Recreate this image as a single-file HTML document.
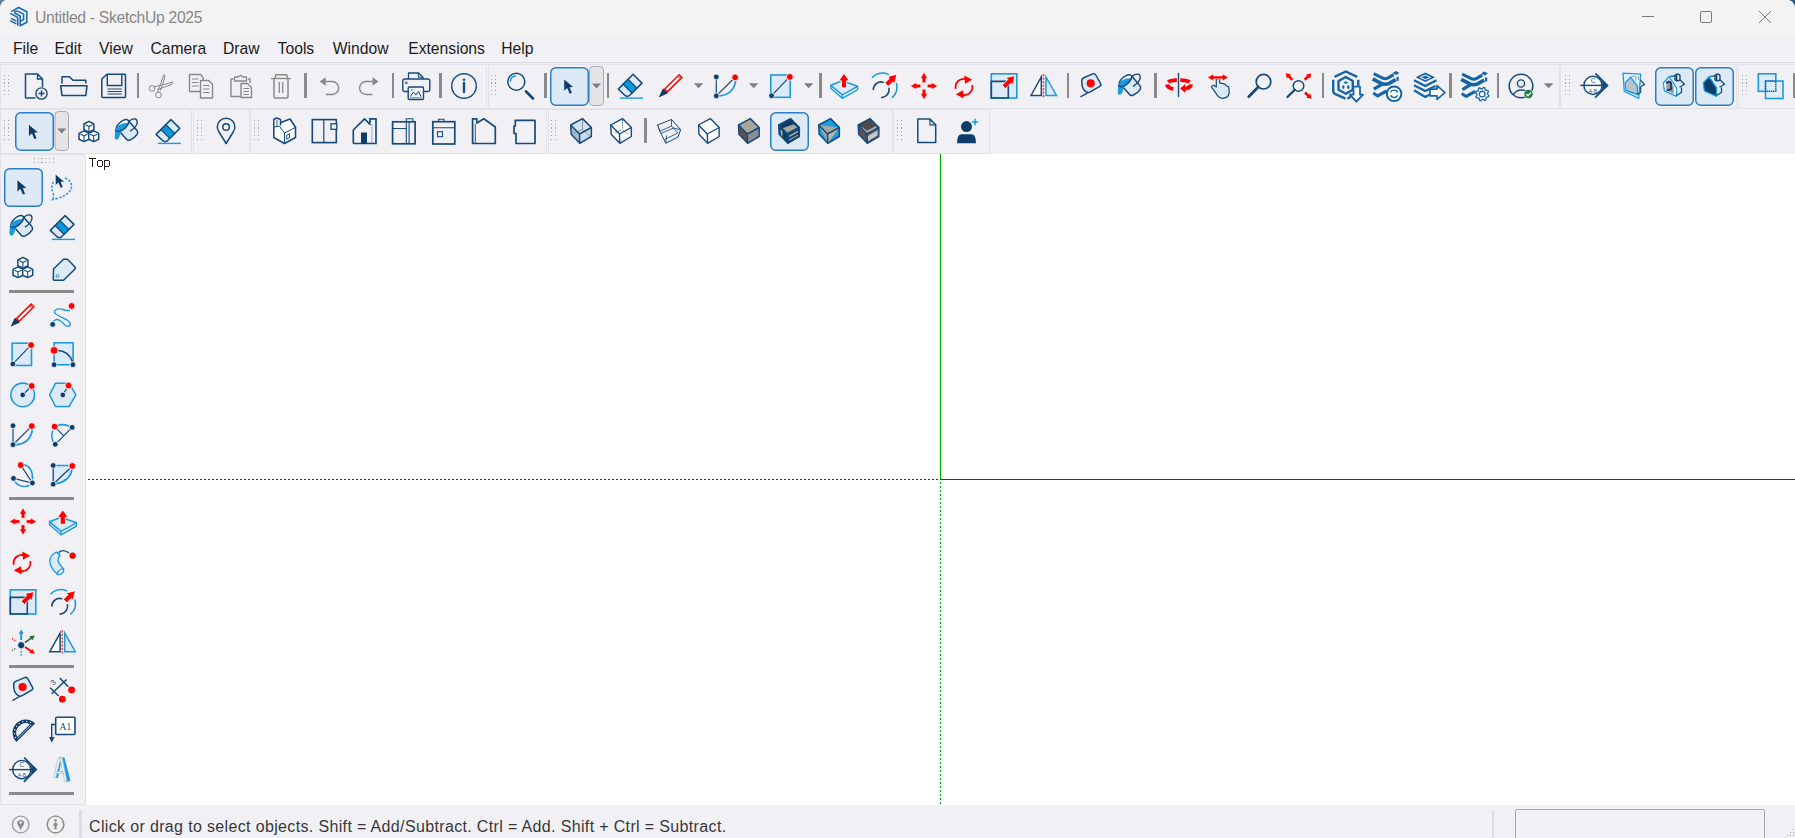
<!DOCTYPE html>
<html><head><meta charset="utf-8"><style>
html,body{margin:0;padding:0;width:1795px;height:838px;overflow:hidden;background:#f1f1f5;}
body{position:relative;font-family:"Liberation Sans",sans-serif;}
.t{position:absolute;white-space:nowrap;}
.m{position:absolute;top:39px;font-size:15.7px;line-height:20px;color:#1b1b1b;white-space:nowrap;}
</style></head><body>
<svg width="1795" height="838" viewBox="0 0 1795 838" style="position:absolute;left:0;top:0"><rect x="0" y="0" width="1795" height="36" fill="#f3f3f3"/><rect x="0" y="36" width="1795" height="802" fill="#f1f1f5"/><rect x="0" y="62" width="1795" height="1" fill="#d9dadf"/><rect x="0.5" y="64.5" width="486" height="44" fill="none" stroke="#e1e2ea" stroke-width="1" shape-rendering="crispEdges"/><rect x="488.5" y="64.5" width="1071" height="44" fill="none" stroke="#e1e2ea" stroke-width="1" shape-rendering="crispEdges"/><rect x="1560.5" y="64.5" width="176" height="44" fill="none" stroke="#e1e2ea" stroke-width="1" shape-rendering="crispEdges"/><rect x="1738.5" y="64.5" width="62" height="44" fill="none" stroke="#e1e2ea" stroke-width="1" shape-rendering="crispEdges"/><rect x="0.5" y="109.5" width="191" height="44" fill="none" stroke="#e1e2ea" stroke-width="1" shape-rendering="crispEdges"/><rect x="193.5" y="109.5" width="56" height="44" fill="none" stroke="#e1e2ea" stroke-width="1" shape-rendering="crispEdges"/><rect x="250.5" y="109.5" width="296" height="44" fill="none" stroke="#e1e2ea" stroke-width="1" shape-rendering="crispEdges"/><rect x="548.5" y="109.5" width="344" height="44" fill="none" stroke="#e1e2ea" stroke-width="1" shape-rendering="crispEdges"/><rect x="893.5" y="109.5" width="96" height="44" fill="none" stroke="#e1e2ea" stroke-width="1" shape-rendering="crispEdges"/><rect x="0.5" y="154.5" width="85" height="650" fill="none" stroke="#e1e2ea" stroke-width="1" shape-rendering="crispEdges"/><rect x="86" y="154" width="1709" height="651" fill="#ffffff"/><rect x="4" y="75" width="1" height="1" fill="#a3a3a8"/><rect x="8" y="75" width="1" height="1" fill="#a3a3a8"/><rect x="4" y="79" width="1" height="1" fill="#a3a3a8"/><rect x="8" y="79" width="1" height="1" fill="#a3a3a8"/><rect x="4" y="82" width="1" height="2" fill="#a3a3a8"/><rect x="8" y="82" width="1" height="2" fill="#a3a3a8"/><rect x="4" y="86" width="1" height="1" fill="#a3a3a8"/><rect x="8" y="86" width="1" height="1" fill="#a3a3a8"/><rect x="4" y="90" width="1" height="1" fill="#a3a3a8"/><rect x="8" y="90" width="1" height="1" fill="#a3a3a8"/><rect x="4" y="94" width="1" height="1" fill="#a3a3a8"/><rect x="8" y="94" width="1" height="1" fill="#a3a3a8"/><rect x="491" y="75" width="1" height="1" fill="#a3a3a8"/><rect x="495" y="75" width="1" height="1" fill="#a3a3a8"/><rect x="491" y="79" width="1" height="1" fill="#a3a3a8"/><rect x="495" y="79" width="1" height="1" fill="#a3a3a8"/><rect x="491" y="82" width="1" height="2" fill="#a3a3a8"/><rect x="495" y="82" width="1" height="2" fill="#a3a3a8"/><rect x="491" y="86" width="1" height="1" fill="#a3a3a8"/><rect x="495" y="86" width="1" height="1" fill="#a3a3a8"/><rect x="491" y="90" width="1" height="1" fill="#a3a3a8"/><rect x="495" y="90" width="1" height="1" fill="#a3a3a8"/><rect x="491" y="94" width="1" height="1" fill="#a3a3a8"/><rect x="495" y="94" width="1" height="1" fill="#a3a3a8"/><rect x="1565" y="75" width="1" height="1" fill="#a3a3a8"/><rect x="1569" y="75" width="1" height="1" fill="#a3a3a8"/><rect x="1565" y="79" width="1" height="1" fill="#a3a3a8"/><rect x="1569" y="79" width="1" height="1" fill="#a3a3a8"/><rect x="1565" y="82" width="1" height="2" fill="#a3a3a8"/><rect x="1569" y="82" width="1" height="2" fill="#a3a3a8"/><rect x="1565" y="86" width="1" height="1" fill="#a3a3a8"/><rect x="1569" y="86" width="1" height="1" fill="#a3a3a8"/><rect x="1565" y="90" width="1" height="1" fill="#a3a3a8"/><rect x="1569" y="90" width="1" height="1" fill="#a3a3a8"/><rect x="1565" y="94" width="1" height="1" fill="#a3a3a8"/><rect x="1569" y="94" width="1" height="1" fill="#a3a3a8"/><rect x="1742" y="75" width="1" height="1" fill="#a3a3a8"/><rect x="1746" y="75" width="1" height="1" fill="#a3a3a8"/><rect x="1742" y="79" width="1" height="1" fill="#a3a3a8"/><rect x="1746" y="79" width="1" height="1" fill="#a3a3a8"/><rect x="1742" y="82" width="1" height="2" fill="#a3a3a8"/><rect x="1746" y="82" width="1" height="2" fill="#a3a3a8"/><rect x="1742" y="86" width="1" height="1" fill="#a3a3a8"/><rect x="1746" y="86" width="1" height="1" fill="#a3a3a8"/><rect x="1742" y="90" width="1" height="1" fill="#a3a3a8"/><rect x="1746" y="90" width="1" height="1" fill="#a3a3a8"/><rect x="1742" y="94" width="1" height="1" fill="#a3a3a8"/><rect x="1746" y="94" width="1" height="1" fill="#a3a3a8"/><rect x="4" y="120" width="1" height="1" fill="#a3a3a8"/><rect x="8" y="120" width="1" height="1" fill="#a3a3a8"/><rect x="4" y="124" width="1" height="1" fill="#a3a3a8"/><rect x="8" y="124" width="1" height="1" fill="#a3a3a8"/><rect x="4" y="127" width="1" height="2" fill="#a3a3a8"/><rect x="8" y="127" width="1" height="2" fill="#a3a3a8"/><rect x="4" y="131" width="1" height="1" fill="#a3a3a8"/><rect x="8" y="131" width="1" height="1" fill="#a3a3a8"/><rect x="4" y="135" width="1" height="1" fill="#a3a3a8"/><rect x="8" y="135" width="1" height="1" fill="#a3a3a8"/><rect x="4" y="139" width="1" height="1" fill="#a3a3a8"/><rect x="8" y="139" width="1" height="1" fill="#a3a3a8"/><rect x="197" y="120" width="1" height="1" fill="#a3a3a8"/><rect x="201" y="120" width="1" height="1" fill="#a3a3a8"/><rect x="197" y="124" width="1" height="1" fill="#a3a3a8"/><rect x="201" y="124" width="1" height="1" fill="#a3a3a8"/><rect x="197" y="127" width="1" height="2" fill="#a3a3a8"/><rect x="201" y="127" width="1" height="2" fill="#a3a3a8"/><rect x="197" y="131" width="1" height="1" fill="#a3a3a8"/><rect x="201" y="131" width="1" height="1" fill="#a3a3a8"/><rect x="197" y="135" width="1" height="1" fill="#a3a3a8"/><rect x="201" y="135" width="1" height="1" fill="#a3a3a8"/><rect x="197" y="139" width="1" height="1" fill="#a3a3a8"/><rect x="201" y="139" width="1" height="1" fill="#a3a3a8"/><rect x="254" y="120" width="1" height="1" fill="#a3a3a8"/><rect x="258" y="120" width="1" height="1" fill="#a3a3a8"/><rect x="254" y="124" width="1" height="1" fill="#a3a3a8"/><rect x="258" y="124" width="1" height="1" fill="#a3a3a8"/><rect x="254" y="127" width="1" height="2" fill="#a3a3a8"/><rect x="258" y="127" width="1" height="2" fill="#a3a3a8"/><rect x="254" y="131" width="1" height="1" fill="#a3a3a8"/><rect x="258" y="131" width="1" height="1" fill="#a3a3a8"/><rect x="254" y="135" width="1" height="1" fill="#a3a3a8"/><rect x="258" y="135" width="1" height="1" fill="#a3a3a8"/><rect x="254" y="139" width="1" height="1" fill="#a3a3a8"/><rect x="258" y="139" width="1" height="1" fill="#a3a3a8"/><rect x="551" y="120" width="1" height="1" fill="#a3a3a8"/><rect x="555" y="120" width="1" height="1" fill="#a3a3a8"/><rect x="551" y="124" width="1" height="1" fill="#a3a3a8"/><rect x="555" y="124" width="1" height="1" fill="#a3a3a8"/><rect x="551" y="127" width="1" height="2" fill="#a3a3a8"/><rect x="555" y="127" width="1" height="2" fill="#a3a3a8"/><rect x="551" y="131" width="1" height="1" fill="#a3a3a8"/><rect x="555" y="131" width="1" height="1" fill="#a3a3a8"/><rect x="551" y="135" width="1" height="1" fill="#a3a3a8"/><rect x="555" y="135" width="1" height="1" fill="#a3a3a8"/><rect x="551" y="139" width="1" height="1" fill="#a3a3a8"/><rect x="555" y="139" width="1" height="1" fill="#a3a3a8"/><rect x="897" y="120" width="1" height="1" fill="#a3a3a8"/><rect x="901" y="120" width="1" height="1" fill="#a3a3a8"/><rect x="897" y="124" width="1" height="1" fill="#a3a3a8"/><rect x="901" y="124" width="1" height="1" fill="#a3a3a8"/><rect x="897" y="127" width="1" height="2" fill="#a3a3a8"/><rect x="901" y="127" width="1" height="2" fill="#a3a3a8"/><rect x="897" y="131" width="1" height="1" fill="#a3a3a8"/><rect x="901" y="131" width="1" height="1" fill="#a3a3a8"/><rect x="897" y="135" width="1" height="1" fill="#a3a3a8"/><rect x="901" y="135" width="1" height="1" fill="#a3a3a8"/><rect x="897" y="139" width="1" height="1" fill="#a3a3a8"/><rect x="901" y="139" width="1" height="1" fill="#a3a3a8"/><rect x="34" y="158" width="1" height="1" fill="#a3a3a8"/><rect x="34" y="162" width="1" height="1" fill="#a3a3a8"/><rect x="38" y="158" width="1" height="1" fill="#a3a3a8"/><rect x="38" y="162" width="1" height="1" fill="#a3a3a8"/><rect x="41" y="158" width="2" height="1" fill="#a3a3a8"/><rect x="41" y="162" width="2" height="1" fill="#a3a3a8"/><rect x="45" y="158" width="1" height="1" fill="#a3a3a8"/><rect x="45" y="162" width="1" height="1" fill="#a3a3a8"/><rect x="49" y="158" width="1" height="1" fill="#a3a3a8"/><rect x="49" y="162" width="1" height="1" fill="#a3a3a8"/><rect x="53" y="158" width="1" height="1" fill="#a3a3a8"/><rect x="53" y="162" width="1" height="1" fill="#a3a3a8"/><g transform="translate(24.5,73)"><path d="M1 25 V1 H13 L18 6 V14" fill="none" stroke="#164a7b" stroke-width="1.5"/><path d="M13 1 V6 H18" fill="none" stroke="#164a7b" stroke-width="1.3"/><path d="M1 25 H11" fill="none" stroke="#164a7b" stroke-width="1.5"/><circle cx="17" cy="20.5" r="5.6" fill="#f1f1f5" stroke="#164a7b" stroke-width="1.4"/><path d="M17 17.5 V23.5 M14 20.5 H20" stroke="#164a7b" stroke-width="1.5"/></g><g transform="translate(60,76)"><path d="M2 7 V0.8 H9.5 L13 4.3 H25.8 V7" fill="none" stroke="#164a7b" stroke-width="1.5" stroke-linejoin="round" stroke-linecap="round"/><path d="M0.7 9.7 H27 L25.8 19.5 H2 Z" fill="none" stroke="#164a7b" stroke-width="1.6" stroke-linejoin="round" stroke-linecap="round"/></g><g transform="translate(101,73.5)"><path d="M0.8 5.5 L6 0.8 H23.5 Q24.5 0.8 24.5 2 V23 Q24.5 24 23.5 24 H1.8 Q0.8 24 0.8 23 Z" fill="none" stroke="#164a7b" stroke-width="1.5"/><path d="M6.3 0.8 V12 H20.8 V0.8" fill="none" stroke="#164a7b" stroke-width="1.4"/><path d="M6.5 15.5 H20.8 M6.5 18 H20.8 M6.5 20.5 H20.8" stroke="#164a7b" stroke-width="1.1"/></g><rect x="137" y="73" width="2" height="25" fill="#8a8a8a"/><g transform="translate(148.5,73.5)"><circle cx="3.5" cy="15" r="2.8" fill="none" stroke="#888888" stroke-width="1"/><circle cx="10" cy="21.5" r="2.8" fill="none" stroke="#888888" stroke-width="1"/><path d="M5.5 13.5 L24.5 8.5 L23 11 L9 16 M9 19 L15.5 1 L16.5 3.5 L12 17" fill="none" stroke="#888888" stroke-width="1" stroke-linejoin="round" stroke-linecap="round"/></g><g transform="translate(188.5,73.5)"><path d="M1 1 H12 L14.5 3.8 V18 H1 Z" fill="#f1f1f5" stroke="#888888" stroke-width="1.4" stroke-linejoin="round" stroke-linecap="round"/><path d="M3.5 5.5 H10 M3.5 9 H10 M3.5 12.5 H10" stroke="#888888" stroke-width="1"/><path d="M12 7 H20.2 L24 10.8 V24.5 H12 Z" fill="#f1f1f5" stroke="#888888" stroke-width="1.4" stroke-linejoin="round" stroke-linecap="round"/><path d="M14.5 12 H21 M14.5 15.5 H21 M14.5 19 H21" stroke="#888888" stroke-width="1"/></g><g transform="translate(230,73.5)"><path d="M3 5.5 H1 V23 H12 M18.5 5.5 H20 V9" fill="none" stroke="#888888" stroke-width="1.4" stroke-linejoin="round" stroke-linecap="round"/><path d="M4.5 3.5 H8.5 Q10.5 0.5 12.5 3.5 H16.5 V7.5 H4.5 Z" fill="#f1f1f5" stroke="#888888" stroke-width="1.3" stroke-linejoin="round" stroke-linecap="round"/><path d="M11 10 H17.5 L21.5 14 V24 H11 Z" fill="#f1f1f5" stroke="#888888" stroke-width="1.4" stroke-linejoin="round" stroke-linecap="round"/><path d="M13.5 15 H19 M13.5 18 H19 M13.5 21 H19" stroke="#888888" stroke-width="1"/></g><g transform="translate(271,74)"><path d="M0 4.5 H20" stroke="#888888" stroke-width="1.3"/><path d="M4.5 4.5 V1.5 Q4.5 0.8 5.5 0.8 H15 Q16 0.8 16 1.5 V4.5" fill="none" stroke="#888888" stroke-width="1.4"/><path d="M3 4.5 V22.5 Q3 24 4.5 24 H15.5 Q17 24 17 22.5 V4.5" fill="none" stroke="#888888" stroke-width="1.5"/><path d="M8.3 8 V19 M11.7 8 V19" stroke="#888888" stroke-width="1.3"/></g><rect x="304" y="73" width="3" height="25" fill="#8a8a8a"/><g transform="translate(319.7,77.3)"><path d="M0 4.2 L6 0 V8.4 Z" fill="#888888"/><path d="M5.5 4.2 H12.5 A6.5 6.5 0 0 1 12.5 17.2 H6" fill="none" stroke="#888888" stroke-width="1.4"/></g><g transform="translate(358.5,77.3)"><path d="M20 4.2 L14 0 V8.4 Z" fill="#888888"/><path d="M14.5 4.2 H7.5 A6.5 6.5 0 0 0 7.5 17.2 H14" fill="none" stroke="#888888" stroke-width="1.4"/></g><rect x="392" y="73" width="2" height="25" fill="#8a8a8a"/><g transform="translate(402,72)"><path d="M6.5 7 V1 H16.5 L21 5.2 V7" fill="none" stroke="#164a7b" stroke-width="1.3" stroke-linejoin="round" stroke-linecap="round"/><path d="M16.3 1 V5.2 H21" fill="none" stroke="#164a7b" stroke-width="1"/><rect x="0.8" y="7" width="27" height="12.5" rx="2" fill="#f1f1f5" stroke="#164a7b" stroke-width="1.4"/><circle cx="4.3" cy="10.8" r="1" fill="none" stroke="#164a7b" stroke-width="0.9"/><rect x="6.2" y="15" width="15.3" height="12.5" rx="1" fill="#f1f1f5" stroke="#164a7b" stroke-width="1.4"/><path d="M8.5 24.5 L11.5 20 L14 23 L16.5 19.5 L19 24.5" fill="none" stroke="#164a7b" stroke-width="1"/><path d="M8 25.8 H20" stroke="#164a7b" stroke-width="1" opacity=".6"/><circle cx="9.8" cy="18" r="0.7" fill="#164a7b"/></g><rect x="439" y="73" width="3" height="25" fill="#8a8a8a"/><g transform="translate(451,73)"><circle cx="13" cy="13" r="12.3" fill="none" stroke="#164a7b" stroke-width="1.4"/><circle cx="13" cy="6.8" r="1.3" fill="#164a7b"/><path d="M13 10 V19" stroke="#164a7b" stroke-width="2.4" stroke-linecap="round"/></g><g transform="translate(507,72.5)"><circle cx="9.3" cy="9.3" r="8.5" fill="none" stroke="#164a7b" stroke-width="1.5"/><path d="M3.5 8.5 A5.5 5.5 0 0 1 8.5 3.5" fill="none" stroke="#1b9ae0" stroke-width="1.5" stroke-linecap="round"/><path d="M19 19 L26 26" stroke="#164a7b" stroke-width="2.6" stroke-linecap="round"/></g><rect x="544" y="73" width="3" height="25" fill="#8a8a8a"/><rect x="550.75" y="67.75" width="37.5" height="37.5" rx="5" fill="#ddeaf6" stroke="#2b7ec9" stroke-width="1.5"/><rect x="589.5" y="66.5" width="14" height="39" rx="3.5" fill="#e4e4e7" stroke="#acacb0" stroke-width="1"/><path d="M592.0 83.5 L601.0 83.5 L596.5 88.5 Z" fill="#7f7f82"/><g transform="translate(563.8,78.7)"><path d="M0 0 L0 12.8 L3.3 9.9 L5.6 15.6 L8.6 14.4 L6.3 8.9 L10.4 8.8 Z" fill="#0f3d6b" stroke="#ffffff" stroke-width="0.7" stroke-linejoin="round"/></g><rect x="607" y="73" width="2" height="25" fill="#8a8a8a"/><g transform="translate(617.5,73.5)"><path d="M15.6 0.8 L24.5 9.6 L12 22 Q9.5 24 7 21.5 L0.8 15.6 Z" fill="#dce9f6" stroke="#164a7b" stroke-width="1.5" stroke-linejoin="round"/><path d="M10.6 5.8 L19.5 14.6 L14.5 19.6 L5.6 10.8 Z" fill="#0a96dc" stroke="#164a7b" stroke-width="1.3" stroke-linejoin="round"/><path d="M2.5 24.6 H25.5" stroke="#1b9ae0" stroke-width="1.4"/></g><g transform="translate(658.6,73.8)"><path d="M0 23.6 L4.4 14.4 L9.4 19.4 Z" fill="#0f3d6b"/><path d="M6 15.4 L20.6 0.9 L23.3 3.6 L8.7 18.1 Z" fill="#ffffff" stroke="#ff0000" stroke-width="1.5" stroke-linejoin="miter"/><circle cx="20.5" cy="3.6" r="0.7" fill="none" stroke="#ff0000" stroke-width="0.6"/></g><path d="M693.8 83.3 L703.3 83.3 L698.55 88.3 Z" fill="#7f7f82"/><g transform="translate(713.8,74)"><path d="M2.5 2.9 V21.9 L21.3 3.3" fill="none" stroke="#164a7b" stroke-width="1.2"/><path d="M4.5 22.2 Q20 20.5 21.8 7" fill="none" stroke="#1b9ae0" stroke-width="1.8"/><circle cx="2.5" cy="2.9" r="2.9" fill="#0f3d6b" stroke="#fff" stroke-width=".8"/><circle cx="2.5" cy="21.9" r="2.9" fill="#0f3d6b" stroke="#fff" stroke-width=".8"/><circle cx="21.3" cy="3.3" r="3.4" fill="#ff0000" stroke="#fff" stroke-width=".8"/></g><path d="M748.9 83.3 L758.4 83.3 L753.65 88.3 Z" fill="#7f7f82"/><g transform="translate(769,73.8)"><rect x="1.8" y="1.2" width="19.4" height="22.3" fill="#dce9f6" stroke="#1b9ae0" stroke-width="1.6"/><path d="M2.6 21.9 L20.8 2.9" stroke="#164a7b" stroke-width="1.2"/><circle cx="2.6" cy="21.9" r="2.9" fill="#0f3d6b" stroke="#fff" stroke-width=".8"/><circle cx="20.8" cy="3.1" r="3.4" fill="#ff0000" stroke="#fff" stroke-width=".8"/></g><path d="M803.9 83.3 L813.4 83.3 L808.65 88.3 Z" fill="#7f7f82"/><rect x="819" y="73" width="3" height="25" fill="#8a8a8a"/><g transform="translate(830,73)"><path d="M0.8 12.3 L12 7.8 L27.6 13.3 L12.3 21.8 Z" fill="#dce9f6" stroke="#1b9ae0" stroke-width="1.5" stroke-linejoin="round"/><path d="M0.8 12.3 V15.3 L12.3 25.3 L27.6 16.6 V13.3 M12.3 21.8 V25.3" fill="none" stroke="#1b9ae0" stroke-width="1.4" stroke-linejoin="round"/><path d="M14 0.3 L19.3 7.8 H16.6 V14.8 H11.4 V7.8 H8.7 Z" fill="#ff0000" stroke="#fff" stroke-width=".9" stroke-linejoin="round"/></g><g transform="translate(871,72.5)"><path d="M1.4 4.7 A14 14 0 0 1 17.3 1.9" fill="none" stroke="#1b9ae0" stroke-width="1.6" stroke-linecap="round"/><path d="M25.5 11 A14 14 0 0 1 21.4 24.9" fill="none" stroke="#1b9ae0" stroke-width="1.6" stroke-linecap="round"/><path d="M2.3 17 A7.9 7.9 0 0 1 12.2 9.7" fill="none" stroke="#164a7b" stroke-width="1.6" stroke-linecap="round"/><path d="M18 15.7 A7.9 7.9 0 0 1 10.7 25.1" fill="none" stroke="#164a7b" stroke-width="1.6" stroke-linecap="round"/><path d="M17.38 13.86 L21.91 9.29 L23.68 11.04 L25.90 1.70 L16.58 4.01 L18.35 5.77 L13.82 10.34 Z" fill="#ff0000" stroke="#fff" stroke-width="0.9" stroke-linejoin="round"/></g><g transform="translate(910.5,72.5)"><path d="M13.5 -0.2 L17 6 H15.3 V10.2 H11.7 V6 H10 Z" fill="#ff0000" stroke="#fff" stroke-width=".5" stroke-linejoin="round" transform="rotate(0 13.5 13.5)"/><path d="M13.5 -0.2 L17 6 H15.3 V10.2 H11.7 V6 H10 Z" fill="#ff0000" stroke="#fff" stroke-width=".5" stroke-linejoin="round" transform="rotate(90 13.5 13.5)"/><path d="M13.5 -0.2 L17 6 H15.3 V10.2 H11.7 V6 H10 Z" fill="#ff0000" stroke="#fff" stroke-width=".5" stroke-linejoin="round" transform="rotate(180 13.5 13.5)"/><path d="M13.5 -0.2 L17 6 H15.3 V10.2 H11.7 V6 H10 Z" fill="#ff0000" stroke="#fff" stroke-width=".5" stroke-linejoin="round" transform="rotate(270 13.5 13.5)"/></g><g transform="translate(954,75.5)"><path d="M1.8 13.3 A8.2 8.2 0 0 1 11.5 3.5" fill="none" stroke="#ff0000" stroke-width="1.8"/><path d="M10.3 0 L18.2 4.3 L11 8.3 Z" fill="#ff0000"/><path d="M18.2 9.5 A8.2 8.2 0 0 1 8.5 19.5" fill="none" stroke="#ff0000" stroke-width="1.8"/><path d="M9.7 23 L1.8 18.7 L9 14.7 Z" fill="#ff0000"/></g><g transform="translate(990.5,73)"><rect x="0.8" y="0.8" width="25.5" height="24.2" fill="#dce9f6" stroke="#1b9ae0" stroke-width="1.6"/><path d="M0.8 8.4 H17.8 V25 H0.8 Z" fill="none" stroke="#164a7b" stroke-width="1.6"/><path d="M14.94 15.51 L20.69 9.66 L22.61 11.55 L24.30 2.70 L15.48 4.55 L17.40 6.44 L11.66 12.29 Z" fill="#ff0000" stroke="#fff" stroke-width="0.8" stroke-linejoin="round"/></g><g transform="translate(1030,73.5)"><path d="M1 22 L11.3 3.5 V22 Z" fill="#fff" stroke="#164a7b" stroke-width="1.5" stroke-linejoin="miter"/><path d="M16 3.5 L26.5 22 H16 Z" fill="#dce9f6" stroke="#1b9ae0" stroke-width="1.5" stroke-linejoin="miter"/><path d="M13.5 0.5 V24" stroke="#f04848" stroke-width="1.6" stroke-dasharray="2.2 1.3"/></g><rect x="1067" y="73" width="2" height="25" fill="#8a8a8a"/><g transform="translate(1080,70.1)"><g transform="translate(-1 0)"><path d="M9.5 22.2 L1.5 26.8" stroke="#164a7b" stroke-width="1.4"/><path d="M2.8 11 Q2.5 8.6 4.8 7.6 L13.6 3.8 Q15.8 3 16.8 4.9 L21.6 13.5 Q22.5 15.3 20.8 16.3 L10.8 22 Q9 22.8 7.3 21.8 Q3.5 19.5 3 14.5 Z" fill="#dce9f6" stroke="#164a7b" stroke-width="1.5" stroke-linejoin="round"/><circle cx="11.7" cy="13.2" r="4.1" fill="#ff0000"/></g></g><g transform="translate(1118,73.5)"><g transform="translate(-4.2 -3.7)"><path d="M9.3 17.5 L15.8 24.8 Q17.3 26.3 19.5 25.2 Q24.5 22.8 26.5 19.5 Q27.6 17.3 26 15.6 L17.5 5.8" fill="#dce9f6" stroke="#164a7b" stroke-width="1.5" stroke-linejoin="round"/><ellipse cx="11.5" cy="10.8" rx="7.8" ry="3.7" transform="rotate(-42 11.5 10.8)" fill="#fff" stroke="#164a7b" stroke-width="1.4"/><path d="M16.3 8.5 Q9.5 8.3 5.8 13 Q3.6 17 3.9 23 Q4.2 25.6 6.5 24.9 Q8.8 23.6 9.4 20 Q9.9 17.5 11.7 15.7 L16.5 10.8 Z" fill="#1b9ae0"/><path d="M4.6 15.2 A7.8 3.7 -42 0 0 18 6" fill="none" stroke="#164a7b" stroke-width="1.4"/><path d="M19.3 16.5 Q24.8 13.2 26.2 9 Q27 5.3 24.5 4.4 Q21.5 3.8 18.3 6.6" fill="none" stroke="#164a7b" stroke-width="1.4"/></g></g><rect x="1154" y="73" width="3" height="25" fill="#8a8a8a"/><g transform="translate(1166,73)"><g transform="translate(-4 -3)"><path d="M14.9 10.2 Q8 10.3 6.3 12.2" fill="none" stroke="#ff0000" stroke-width="3.8"/><path d="M18.3 10.2 Q25.5 10.3 27.6 12.2" fill="none" stroke="#ff0000" stroke-width="3.8"/><path d="M5 14.5 Q5.5 17.5 11.2 19.2" fill="none" stroke="#ff0000" stroke-width="4"/><path d="M28.8 14.3 Q29 17.6 22.5 18.8" fill="none" stroke="#ff0000" stroke-width="4"/><path d="M18.2 18.6 L23.2 14 V23 Z" fill="#ff0000"/><path d="M16.5 3.5 V26.5" stroke="#164a7b" stroke-width="1.4" stroke-linecap="round"/></g></g><g transform="translate(1207.5,73.5)"><path d="M8.8 13.5 V6 Q10.5 4.3 12.2 6 V9.6 L15.1 9.9 L17.6 10.9 L18.9 12.4 L21.2 13.3 Q21.9 17 21.6 19.6 Q20.8 24.6 15.1 24.8 Q12.3 24.6 10.4 22.6 L4 13.3 Q4.9 11.5 6.3 11.8 Z" fill="#dce9f6" stroke="#164a7b" stroke-width="1.2" stroke-linejoin="round"/><path d="M-0.2 3.9 L6 0.2 V2.4 H15 V0.2 L20.9 3.9 L15 7.5 V5.4 H6 V7.5 Z" fill="#ff0000" stroke="#fff" stroke-width=".6" stroke-linejoin="round"/></g><g transform="translate(1247,73.5)"><circle cx="16.5" cy="8.2" r="7.3" fill="none" stroke="#164a7b" stroke-width="1.7"/><path d="M11.2 13.5 L1.7 23.2" stroke="#164a7b" stroke-width="2.7" stroke-linecap="round"/></g><g transform="translate(1285.5,73)"><circle cx="13" cy="13" r="5.3" fill="none" stroke="#164a7b" stroke-width="1.5"/><path d="M9.3 16.8 L2 24" stroke="#164a7b" stroke-width="2.3" stroke-linecap="round"/><path d="M7.72 5.88 L4.30 2.46 L5.43 1.33 L0.20 0.20 L1.33 5.43 L2.46 4.30 L5.88 7.72 Z" fill="#ff0000"/><path d="M20.10 7.73 L23.47 4.47 L24.59 5.61 L25.80 0.40 L20.55 1.45 L21.66 2.60 L18.30 5.87 Z" fill="#ff0000"/><path d="M18.60 20.43 L21.86 23.60 L20.75 24.75 L26.00 25.80 L24.79 20.59 L23.67 21.73 L20.40 18.57 Z" fill="#ff0000"/></g><rect x="1322" y="73" width="2" height="25" fill="#8a8a8a"/><g transform="translate(1332,70.5)"><g transform="translate(-2 -2.3)"><path d="M4.5 8.7 L15.8 3.3 L27.2 8.7" fill="none" stroke="#1464a8" stroke-width="2.4"/><path d="M3.2 11.5 V23 Q3.5 25 5.5 26 L15.5 30.5" fill="none" stroke="#1464a8" stroke-width="2.4"/><path d="M28.3 11.5 V18.5 M17.5 30.5 L20.5 28.5" fill="none" stroke="#1464a8" stroke-width="2.4"/><path d="M15.8 8.8 L22.8 12.8 V21.5 L15.8 25.5 L8.5 21.5 V12.8 Z" fill="none" stroke="#1464a8" stroke-width="2.4" stroke-linejoin="round"/><path d="M15.8 13 L18.2 14.4 L15.8 15.8 L13.4 14.4 Z" fill="#1464a8"/><ellipse cx="13.3" cy="18.9" rx="1.2" ry="1.9" fill="#1464a8"/><ellipse cx="18.3" cy="18.9" rx="1.2" ry="1.9" fill="#1464a8"/><path d="M23.5 18.5 H30 V26.5 H33 L26.3 33.5 L19.8 26.5 H23.5 Z" fill="#fff" stroke="#1464a8" stroke-width="1.8" stroke-linejoin="round"/></g></g><g transform="translate(1372,72)"><g transform="translate(-2.3 -4.4)"><path d="M4 6 L12.5 10.3 Q15.5 11.8 18.5 10.3 L24 7" fill="none" stroke="#1464a8" stroke-width="3"/><path d="M24.3 5.3 L26.3 4.2 L28.5 5.4 L26.5 6.6 Z" fill="#1464a8" stroke="#1464a8" stroke-width="1.2"/><path d="M27.9 9.3 V13.3" stroke="#1464a8" stroke-width="2.2"/><path d="M3 11.2 L11.5 15.7 Q15.5 17.6 19.5 15.7 L26 12" fill="none" stroke="#1464a8" stroke-width="3.6"/><path d="M12.5 16.5 L4.2 21.6" fill="none" stroke="#1464a8" stroke-width="3.3"/><path d="M3.5 25.5 L8 28.3 L17 23.3" fill="none" stroke="#1464a8" stroke-width="3" stroke-linejoin="round"/><circle cx="24.4" cy="26.2" r="7.3" fill="#fff" stroke="#1464a8" stroke-width="2"/><path d="M21 24.8 A3.6 3.2 0 0 1 27.5 24 M27.8 27.6 A3.6 3.2 0 0 1 21.3 28.4" fill="none" stroke="#1464a8" stroke-width="1.4"/><path d="M26.5 22.5 L28.8 24.3 L26.3 25 Z M22.3 29.9 L20 28.1 L22.5 27.4 Z" fill="#1464a8"/></g></g><g transform="translate(1413.5,72)"><g transform="translate(-4 -4.4)"><path d="M15.8 5 L25.5 9.7 L15.8 14.3 L6.2 9.7 Z" fill="#1464a8"/><path d="M15.8 7.5 L21 9.8 L15.8 12 L10.6 9.8 Z" fill="none" stroke="#fff" stroke-width="1"/><path d="M4.5 12.7 L15.8 18.5 L27 12.7 M4.5 17.7 L15.8 23.5 L26 18.3 M4.5 22.7 L15.8 29.3 L20 27" fill="none" stroke="#1464a8" stroke-width="2.3" stroke-linejoin="round"/><path d="M20.5 21.5 H27.5 V18 L35.5 25 L27.5 31.7 V28.2 H20.5 Z" fill="#fff" stroke="#1464a8" stroke-width="1.7" stroke-linejoin="round"/></g></g><rect x="1449" y="73" width="3" height="25" fill="#8a8a8a"/><g transform="translate(1460.5,72.5)"><g transform="translate(-2.3 -4.4)"><path d="M4 6 L12.5 10.3 Q15.5 11.8 18.5 10.3 L24 7" fill="none" stroke="#1464a8" stroke-width="3"/><path d="M24.3 5.3 L26.3 4.2 L28.5 5.4 L26.5 6.6 Z" fill="#1464a8" stroke="#1464a8" stroke-width="1.2"/><path d="M27.9 9.3 V13.3" stroke="#1464a8" stroke-width="2.2"/><path d="M3 11.2 L11.5 15.7 Q15.5 17.6 19.5 15.7 L26 12" fill="none" stroke="#1464a8" stroke-width="3.6"/><path d="M12.5 16.5 L4.2 21.6" fill="none" stroke="#1464a8" stroke-width="3.3"/><path d="M3.5 25.5 L8 28.3 L17 23.3" fill="none" stroke="#1464a8" stroke-width="3" stroke-linejoin="round"/></g><path d="M28.36 22.95 L27.97 24.23 L26.10 24.56 L25.44 25.36 L25.46 27.27 L24.28 27.89 L22.72 26.81 L21.68 26.90 L20.35 28.26 L19.07 27.87 L18.74 26.00 L17.94 25.34 L16.03 25.36 L15.41 24.18 L16.49 22.62 L16.40 21.58 L15.04 20.25 L15.43 18.97 L17.30 18.64 L17.96 17.84 L17.94 15.93 L19.12 15.31 L20.68 16.39 L21.72 16.30 L23.05 14.94 L24.33 15.33 L24.66 17.20 L25.46 17.86 L27.37 17.84 L27.99 19.02 L26.91 20.58 L27.00 21.62 Z" fill="#fff" stroke="#1464a8" stroke-width="1.3" stroke-linejoin="round"/><circle cx="21.7" cy="21.6" r="2.856" fill="none" stroke="#1464a8" stroke-width="1.3"/></g><rect x="1497" y="73" width="2" height="25" fill="#8a8a8a"/><g transform="translate(1508.5,73.5)"><circle cx="12.5" cy="12.5" r="11.8" fill="none" stroke="#164a7b" stroke-width="1.5"/><circle cx="12.5" cy="10" r="3.6" fill="none" stroke="#164a7b" stroke-width="1.4"/><path d="M5 21 Q8 16.5 12.5 16.5 Q17 16.5 19.5 19" fill="none" stroke="#164a7b" stroke-width="1.4"/><circle cx="20" cy="20.5" r="4.6" fill="#1a7a3a" stroke="#f1f1f5" stroke-width="0.8"/><path d="M17.8 20.5 L19.5 22.3 L22.5 18.8" fill="none" stroke="#fff" stroke-width="1.3"/></g><path d="M1543.9 83.3 L1553.4 83.3 L1548.65 88.3 Z" fill="#7f7f82"/><g transform="translate(1580,73)"><circle cx="13" cy="12.4" r="9.1" fill="#fff" stroke="#164a7b" stroke-width="1.5"/><path d="M0.3 12.4 H24" stroke="#164a7b" stroke-width="1.5"/><path d="M15.4 0.4 L27.4 12.4 L15.1 24.7" fill="none" stroke="#164a7b" stroke-width="1.7"/><path d="M22.3 7.3 L27.6 12.4 L22.3 17.5 Z" fill="#164a7b"/><text x="13" y="9.8" font-family="Liberation Sans" font-size="6.5" fill="#164a7b" text-anchor="middle">C</text><text x="13" y="19.5" font-family="Liberation Sans" font-size="5" fill="#164a7b" text-anchor="middle">A-B</text></g><g transform="translate(1623,72.5)"><g transform="translate(-5 -4.5)"><path d="M5 5.2 L22.7 6.2 L20.8 30.3 L6.3 23.5 Z" fill="#e3effa" stroke="#1b9ae0" stroke-width="1.3" stroke-linejoin="round"/><path d="M8.5 15.5 L12.7 10.5 L19 18.8 V26.5 L9 22.5 Z" fill="#b9c2cc"/><path d="M7.3 15 L12.7 9.3 L19.5 18.5 V26.5 L8 22.5 Z" fill="none" stroke="#1b9ae0" stroke-width="1.4" stroke-linejoin="round"/><path d="M22.5 12 L26.5 16.5 L22.5 18.8 M22.7 19 V24.5 L19 26.5" fill="none" stroke="#164a7b" stroke-width="1.2"/><path d="M13 9 L17 8 M17.8 8 V12.5 M20.5 8 V12" fill="none" stroke="#a0aab5" stroke-width="1.1"/></g></g><rect x="1655.75" y="67.75" width="37.5" height="37.5" rx="5" fill="#ddeaf6" stroke="#2b7ec9" stroke-width="1.5"/><rect x="1695.75" y="67.75" width="37.5" height="37.5" rx="5" fill="#ddeaf6" stroke="#2b7ec9" stroke-width="1.5"/><g transform="translate(1663,74)"><g transform="translate(-7 -6)"><path d="M7.3 15 L13 8.7 L20.5 19.8 V28.3 L8.5 23 Z" fill="#fff" stroke="#1b9ae0" stroke-width="1.3" stroke-linejoin="round"/><path d="M10 14.5 L13 11.3 L17.8 18.5 V26 L10.5 22.5 Z" fill="#9c9a98"/><path d="M10 14.5 L15 13.8 M15 14 V21.2 L10.5 22.5" fill="none" stroke="#0f3d6b" stroke-width="1.8"/><path d="M14.5 8.3 L19 7.8 M23.5 11.5 L28.5 16.3 L23.5 19.3 M25.5 19.5 V24.5 L20.5 27.5" fill="none" stroke="#164a7b" stroke-width="1.3" stroke-linejoin="round"/><path d="M13 8.7 L15 8" stroke="#1b9ae0" stroke-width="1.2"/><rect x="19" y="6.3" width="5" height="6.5" rx="2" fill="none" stroke="#164a7b" stroke-width="1.4"/><path d="M20.5 6.5 V12" stroke="#164a7b" stroke-width="1.6"/></g></g><g transform="translate(1703,74)"><g transform="translate(-7 -6)"><path d="M7.3 15 L13 8.7 L20.5 19.8 V28.3 L8.5 23 Z" fill="#0f3d6b" stroke="#1b9ae0" stroke-width="1.3" stroke-linejoin="round"/><path d="M14.5 8.3 L19 7.8 M23.5 11.5 L28.5 16.3 L23.5 19.3 M25.5 19.5 V24.5 L20.5 27.5" fill="none" stroke="#164a7b" stroke-width="1.3" stroke-linejoin="round"/><path d="M13 8.7 L15 8" stroke="#1b9ae0" stroke-width="1.2"/><rect x="19" y="6.3" width="5" height="6.5" rx="2" fill="none" stroke="#164a7b" stroke-width="1.4"/><path d="M20.5 6.5 V12" stroke="#164a7b" stroke-width="1.6"/></g></g><g transform="translate(1757.5,73)"><rect x="0.8" y="0.8" width="17.5" height="17.5" fill="#dce9f6" stroke="#1b9ae0" stroke-width="1.6"/><rect x="8" y="8" width="17.5" height="17.5" fill="#dce9f6" fill-opacity=".6" stroke="#1b9ae0" stroke-width="1.6"/><rect x="8" y="8" width="10.3" height="10.3" fill="none" stroke="#164a7b" stroke-width="1.2" stroke-dasharray="1.2 1"/></g><rect x="1793" y="73" width="2" height="25" fill="#8a8a8a"/><rect x="15.75" y="112.75" width="37.5" height="37.5" rx="5" fill="#ddeaf6" stroke="#2b7ec9" stroke-width="1.5"/><rect x="55.0" y="111.5" width="13.5" height="39" rx="3.5" fill="#e4e4e7" stroke="#acacb0" stroke-width="1"/><path d="M57.25 128.5 L66.25 128.5 L61.75 133.5 Z" fill="#7f7f82"/><g transform="translate(28.5,124)"><path d="M0 0 L0 12.8 L3.3 9.9 L5.6 15.6 L8.6 14.4 L6.3 8.9 L10.4 8.8 Z" fill="#0f3d6b" stroke="#ffffff" stroke-width="0.7" stroke-linejoin="round"/></g><g transform="translate(78.5,121)"><g transform="translate(-4.6 -7)"><path d="M15 7.3999999999999995 L20 10.0 V15.8 L15 18.2 L10 15.8 V10.0 Z" fill="#fff" stroke="#164a7b" stroke-width="1.5" stroke-linejoin="round"/><path d="M11.5 10.799999999999999 L15 12.6 L18.5 10.799999999999999 M15 12.6 V17.6" fill="none" stroke="#164a7b" stroke-width="1.1"/><path d="M10.1 16.8 L15.1 19.4 V25.2 L10.1 27.6 L5.1 25.2 V19.4 Z" fill="#fff" stroke="#164a7b" stroke-width="1.5" stroke-linejoin="round"/><path d="M6.6 20.2 L10.1 22 L13.6 20.2 M10.1 22 V27" fill="none" stroke="#164a7b" stroke-width="1.1"/><path d="M19.8 16.8 L24.8 19.4 V25.2 L19.8 27.6 L14.8 25.2 V19.4 Z" fill="#fff" stroke="#164a7b" stroke-width="1.5" stroke-linejoin="round"/><path d="M16.3 20.2 L19.8 22 L23.3 20.2 M19.8 22 V27" fill="none" stroke="#164a7b" stroke-width="1.1"/></g></g><g transform="translate(115,118.3)"><g transform="translate(-4.2 -3.7)"><path d="M9.3 17.5 L15.8 24.8 Q17.3 26.3 19.5 25.2 Q24.5 22.8 26.5 19.5 Q27.6 17.3 26 15.6 L17.5 5.8" fill="#dce9f6" stroke="#164a7b" stroke-width="1.5" stroke-linejoin="round"/><ellipse cx="11.5" cy="10.8" rx="7.8" ry="3.7" transform="rotate(-42 11.5 10.8)" fill="#fff" stroke="#164a7b" stroke-width="1.4"/><path d="M16.3 8.5 Q9.5 8.3 5.8 13 Q3.6 17 3.9 23 Q4.2 25.6 6.5 24.9 Q8.8 23.6 9.4 20 Q9.9 17.5 11.7 15.7 L16.5 10.8 Z" fill="#1b9ae0"/><path d="M4.6 15.2 A7.8 3.7 -42 0 0 18 6" fill="none" stroke="#164a7b" stroke-width="1.4"/><path d="M19.3 16.5 Q24.8 13.2 26.2 9 Q27 5.3 24.5 4.4 Q21.5 3.8 18.3 6.6" fill="none" stroke="#164a7b" stroke-width="1.4"/></g></g><g transform="translate(155.3,118.8)"><path d="M15.6 0.8 L24.5 9.6 L12 22 Q9.5 24 7 21.5 L0.8 15.6 Z" fill="#dce9f6" stroke="#164a7b" stroke-width="1.5" stroke-linejoin="round"/><path d="M10.6 5.8 L19.5 14.6 L14.5 19.6 L5.6 10.8 Z" fill="#0a96dc" stroke="#164a7b" stroke-width="1.3" stroke-linejoin="round"/><path d="M2.5 24.6 H25.5" stroke="#1b9ae0" stroke-width="1.4"/></g><g transform="translate(216.5,118)"><path d="M9.6 25.5 L2.2 13.5 Q0.8 11 0.8 9 A8.8 8.8 0 0 1 18.4 9 Q18.4 11 17 13.5 Z" fill="none" stroke="#164a7b" stroke-width="1.5" stroke-linejoin="round"/><circle cx="9.6" cy="9" r="3.3" fill="none" stroke="#164a7b" stroke-width="1.5"/></g><g transform="translate(273.5,117.5)"><g transform="translate(-5.5 -4.5)"><path d="M5.8 14 V24.5 L16.5 30.5 L27.5 24.5 V14.2 L22 6 L12.5 9.8" fill="#fff" stroke="#164a7b" stroke-width="1.6" stroke-linejoin="round"/><path d="M5.8 14 V6.5 L8.7 5 L12.5 6.5 V12.5" fill="#fff" stroke="#164a7b" stroke-width="1.5" stroke-linejoin="round"/><path d="M9 7 V13" stroke="#164a7b" stroke-width="0.9"/><path d="M11.5 13.3 L16.5 20 L27 14.6 M16.5 20 V30 M5.8 14 L11.5 13.2" fill="none" stroke="#164a7b" stroke-width="1"/><path d="M18.7 22.3 L21.5 20.8 V24.8 L18.7 26.2 Z" fill="none" stroke="#164a7b" stroke-width="1"/></g></g><g transform="translate(311.5,118.8)"><rect x="0.8" y="0.8" width="24" height="23" fill="none" stroke="#164a7b" stroke-width="1.6"/><path d="M12.3 0.8 V23.8" stroke="#164a7b" stroke-width="1.2"/><rect x="19.5" y="5" width="5.8" height="5.5" fill="#f1f1f5" stroke="#164a7b" stroke-width="1.3"/></g><g transform="translate(352.5,118)"><path d="M0.8 25.5 V12 L12 0.8 L18 6.8" fill="none" stroke="#164a7b" stroke-width="1.7" stroke-linejoin="round"/><path d="M17.5 5 V0.8 H23.5 V25.5 H0.8" fill="none" stroke="#164a7b" stroke-width="1.7"/><rect x="8.5" y="14.5" width="6" height="11" fill="#0f3d6b"/><path d="M19.5 6 V25" stroke="#164a7b" stroke-width="0.8" opacity=".5"/></g><g transform="translate(391.8,118)"><rect x="0.8" y="3.8" width="22.5" height="22" fill="none" stroke="#164a7b" stroke-width="1.7"/><path d="M14.5 3.8 V0.8 H21 V3.8 M14.5 3.8 V25.8 M17.3 3.8 V25.8 M0.8 10.5 H14.5" fill="none" stroke="#164a7b" stroke-width="1.1"/></g><g transform="translate(432,118.2)"><rect x="0.8" y="3.5" width="22" height="22.3" fill="none" stroke="#164a7b" stroke-width="1.7"/><path d="M6.5 3.5 V1 H12 V3.5 M0.8 9.5 H22.8" fill="none" stroke="#164a7b" stroke-width="1.1"/><rect x="5.5" y="13.5" width="5" height="5" fill="none" stroke="#164a7b" stroke-width="1.1"/></g><g transform="translate(471.8,118)"><path d="M0.8 25.5 V0.8 H5 V5 L12 0.8 L23.5 9 V25.5 Z" fill="none" stroke="#164a7b" stroke-width="1.7" stroke-linejoin="round"/><path d="M3.5 6 V25" stroke="#164a7b" stroke-width="0.9"/></g><g transform="translate(512.5,119.5)"><path d="M2.8 0.8 H22.5 V24 H3.5 V14 H1.5 V6.5 H2.8 Z" fill="none" stroke="#164a7b" stroke-width="1.7" stroke-linejoin="round"/></g><g transform="translate(570,118)"><path d="M12.5 0.6 L21.4 9.5 L9.5 16 L0.7 7 Z" fill="#cfe3f4"/><path d="M0.7 7 L9.5 16 L9.8 25.3 L1.2 16.3 Z" fill="#a8bdd2"/><path d="M9.5 16 L21.4 9.5 L21.3 18.5 L9.8 25.3 Z" fill="#cadcee"/><path d="M12.5 0.6 V11.5 L2.5 15.5 M12.5 11.5 L20.3 18" fill="none" stroke="#8a8478" stroke-width="0.8"/><path d="M12.5 0.6 L21.4 9.5 L21.3 18.5 L9.8 25.3 L1.2 16.3 L0.7 7 Z" fill="none" stroke="#164a7b" stroke-width="1.5" stroke-linejoin="round"/><path d="M0.7 7 L9.5 16 L21.4 9.5 M9.5 16 L9.8 25.3" fill="none" stroke="#164a7b" stroke-width="1.5" stroke-linejoin="round"/></g><g transform="translate(610,118)"><path d="M12.5 0.6 L21.4 9.5 L9.5 16 L0.7 7 Z" fill="#fff"/><path d="M0.7 7 L9.5 16 L9.8 25.3 L1.2 16.3 Z" fill="#fff"/><path d="M9.5 16 L21.4 9.5 L21.3 18.5 L9.8 25.3 Z" fill="#fff"/><path d="M12.5 2 V11.5 M11 12 L5.5 14.5 M13.5 12.5 L19 17" fill="none" stroke="#164a7b" stroke-width="1" stroke-dasharray="1.2 1.2"/><path d="M12.5 0.6 L21.4 9.5 L21.3 18.5 L9.8 25.3 L1.2 16.3 L0.7 7 Z" fill="none" stroke="#164a7b" stroke-width="1.4" stroke-linejoin="round"/><path d="M0.7 7 L9.5 16 L21.4 9.5 M9.5 16 L9.8 25.3" fill="none" stroke="#164a7b" stroke-width="1.4" stroke-linejoin="round"/></g><rect x="644" y="118" width="3" height="25" fill="#8a8a8a"/><g transform="translate(656.5,118.5)"><g fill="none" stroke="#164a7b" stroke-width="1" stroke-linejoin="round"><path d="M1 6.5 L15 1 L24.2 11.2 L21.3 18.7 L9.3 24.7 L3.9 13.8 Z"/><path d="M1 6.5 L3.9 13.8 M15 1 L15 7.5 L4 12.5 M15 7.5 L21.5 14.5 M4.5 15 L17 9.5 L24.2 11.2 M8 21 L21.3 14.5 M10 17 L9.3 24.7" stroke-width=".85"/></g></g><g transform="translate(697.8,118)"><path d="M12.5 0.6 L21.4 9.5 L9.5 16 L0.7 7 Z" fill="#fff"/><path d="M0.7 7 L9.5 16 L9.8 25.3 L1.2 16.3 Z" fill="#fff"/><path d="M9.5 16 L21.4 9.5 L21.3 18.5 L9.8 25.3 Z" fill="#fff"/><path d="M12.5 0.6 L21.4 9.5 L21.3 18.5 L9.8 25.3 L1.2 16.3 L0.7 7 Z" fill="none" stroke="#164a7b" stroke-width="1.4" stroke-linejoin="round"/><path d="M0.7 7 L9.5 16 L21.4 9.5 M9.5 16 L9.8 25.3" fill="none" stroke="#164a7b" stroke-width="1.4" stroke-linejoin="round"/></g><g transform="translate(737.8,118)"><path d="M12.5 0.6 L21.4 9.5 L9.5 16 L0.7 7 Z" fill="#a9a69b"/><path d="M0.7 7 L9.5 16 L9.8 25.3 L1.2 16.3 Z" fill="#5f5352"/><path d="M9.5 16 L21.4 9.5 L21.3 18.5 L9.8 25.3 Z" fill="#8d8e90"/><path d="M12.5 0.6 L21.4 9.5 L21.3 18.5 L9.8 25.3 L1.2 16.3 L0.7 7 Z" fill="none" stroke="#164a7b" stroke-width="1.5" stroke-linejoin="round"/><path d="M0.7 7 L9.5 16 L21.4 9.5 M9.5 16 L9.8 25.3" fill="none" stroke="#164a7b" stroke-width="1.5" stroke-linejoin="round"/></g><rect x="770.75" y="112.75" width="37.5" height="37.5" rx="5" fill="#ddeaf6" stroke="#2b7ec9" stroke-width="1.5"/><g transform="translate(778,118)"><path d="M12.5 0.6 L21.4 9.5 L9.5 16 L0.7 7 Z" fill="#0f3d6b"/><path d="M0.7 7 L9.5 16 L9.8 25.3 L1.2 16.3 Z" fill="#0f3d6b"/><path d="M9.5 16 L21.4 9.5 L21.3 18.5 L9.8 25.3 Z" fill="#0f3d6b"/><path d="M4 10.5 L9.3 14.8 L19.5 9.6 L15.5 6.2 Z" fill="#a9a69b"/><path d="M2.5 11.5 L4.5 13 V19 L2.8 17.5 Z" fill="#a9a69b"/><path d="M11 17.5 L20 12.5 V14.5 L11 19.3 Z" fill="#a9a69b"/><path d="M11 21.5 L20 16.5 V17.8 L11 22.8 Z" fill="#a9a69b"/><path d="M12.5 0.6 L21.4 9.5 L21.3 18.5 L9.8 25.3 L1.2 16.3 L0.7 7 Z" fill="none" stroke="#164a7b" stroke-width="1.5" stroke-linejoin="round"/><path d="M0.7 7 L9.5 16 L21.4 9.5 M9.5 16 L9.8 25.3" fill="none" stroke="#164a7b" stroke-width="1.5" stroke-linejoin="round"/></g><g transform="translate(818,118)"><path d="M12.5 0.6 L21.4 9.5 L9.5 16 L0.7 7 Z" fill="#1b9ae0"/><path d="M0.7 7 L9.5 16 L9.8 25.3 L1.2 16.3 Z" fill="#1b9ae0"/><path d="M9.5 16 L21.4 9.5 L21.3 18.5 L9.8 25.3 Z" fill="#1b9ae0"/><path d="M0.7 7 L21.4 9.5 L9.5 16 Z" fill="#a9a69b"/><path d="M0.7 7 L9.5 16 L9.8 25.3 Z" fill="#a9a69b"/><path d="M9.5 16 L21.4 9.5 L9.8 25.3 Z" fill="#b9b6ab"/><path d="M12.5 0.6 L21.4 9.5 L21.3 18.5 L9.8 25.3 L1.2 16.3 L0.7 7 Z" fill="none" stroke="#164a7b" stroke-width="1.5" stroke-linejoin="round"/><path d="M0.7 7 L9.5 16 L21.4 9.5 M9.5 16 L9.8 25.3" fill="none" stroke="#164a7b" stroke-width="1.5" stroke-linejoin="round"/></g><g transform="translate(857.5,118)"><path d="M12.5 0.6 L21.4 9.5 L9.5 16 L0.7 7 Z" fill="#4f4a4e"/><path d="M0.7 7 L9.5 16 L9.8 25.3 L1.2 16.3 Z" fill="#5d5252"/><path d="M9.5 16 L21.4 9.5 L21.3 18.5 L9.8 25.3 Z" fill="#6e6a6a"/><path d="M3 10 L9.5 15 L19.5 9.8 L18 8.3 L9.5 12.8 L4 8.8 Z" fill="#b5b3b0"/><path d="M10.5 18 L20 12.5 V17.5 L10.5 23 Z" fill="#c8c8c8"/><path d="M12.5 0.6 L21.4 9.5 L21.3 18.5 L9.8 25.3 L1.2 16.3 L0.7 7 Z" fill="none" stroke="#164a7b" stroke-width="1.5" stroke-linejoin="round"/><path d="M0.7 7 L9.5 16 L21.4 9.5 M9.5 16 L9.8 25.3" fill="none" stroke="#164a7b" stroke-width="1.5" stroke-linejoin="round"/></g><g transform="translate(917,118.3)"><path d="M0.8 24.3 V0.8 H13 L18.7 6.5 V24.3 Z" fill="none" stroke="#164a7b" stroke-width="1.5" stroke-linejoin="round"/><path d="M13 0.8 V6.5 H18.7" fill="none" stroke="#164a7b" stroke-width="1.2"/></g><g transform="translate(957,118.3)"><circle cx="9.5" cy="8.3" r="5.5" fill="#0f3d6b"/><path d="M0 25 Q0 16 4.5 16 H14.5 Q19 16 19 25 Z" fill="#0f3d6b"/><path d="M18 0.5 V7 M14.8 3.8 H21.3" stroke="#1b9ae0" stroke-width="1.5"/></g><rect x="4.75" y="168.75" width="37.5" height="37.5" rx="5" fill="#ddeaf6" stroke="#2b7ec9" stroke-width="1.5"/><g transform="translate(17,179.5)"><path d="M0 0 L0 12.8 L3.3 9.9 L5.6 15.6 L8.6 14.4 L6.3 8.9 L10.4 8.8 Z" fill="#0f3d6b" stroke="#ffffff" stroke-width="0.7" stroke-linejoin="round"/></g><g transform="translate(50,173)"><path d="M15 5 Q22 8 21.5 14 Q20 22 7 25.5 Q3 26.5 0.5 27.5 M3.5 9 Q0.5 13 3 20 Q4.5 24 2.5 26" fill="none" stroke="#1b9ae0" stroke-width="1.5" stroke-dasharray="2.3 1.5"/><g transform="translate(5.3 0.9) scale(0.92)"><path d="M0 0 L0 12.8 L3.3 9.9 L5.6 15.6 L8.6 14.4 L6.3 8.9 L10.4 8.8 Z" fill="#0f3d6b" stroke="#ffffff" stroke-width="0.7" stroke-linejoin="round"/></g></g><g transform="translate(9.8,214.3)"><g transform="translate(-4.2 -3.7)"><path d="M9.3 17.5 L15.8 24.8 Q17.3 26.3 19.5 25.2 Q24.5 22.8 26.5 19.5 Q27.6 17.3 26 15.6 L17.5 5.8" fill="#dce9f6" stroke="#164a7b" stroke-width="1.5" stroke-linejoin="round"/><ellipse cx="11.5" cy="10.8" rx="7.8" ry="3.7" transform="rotate(-42 11.5 10.8)" fill="#fff" stroke="#164a7b" stroke-width="1.4"/><path d="M16.3 8.5 Q9.5 8.3 5.8 13 Q3.6 17 3.9 23 Q4.2 25.6 6.5 24.9 Q8.8 23.6 9.4 20 Q9.9 17.5 11.7 15.7 L16.5 10.8 Z" fill="#1b9ae0"/><path d="M4.6 15.2 A7.8 3.7 -42 0 0 18 6" fill="none" stroke="#164a7b" stroke-width="1.4"/><path d="M19.3 16.5 Q24.8 13.2 26.2 9 Q27 5.3 24.5 4.4 Q21.5 3.8 18.3 6.6" fill="none" stroke="#164a7b" stroke-width="1.4"/></g></g><g transform="translate(49.5,214.8)"><path d="M15.6 0.8 L24.5 9.6 L12 22 Q9.5 24 7 21.5 L0.8 15.6 Z" fill="#dce9f6" stroke="#164a7b" stroke-width="1.5" stroke-linejoin="round"/><path d="M10.6 5.8 L19.5 14.6 L14.5 19.6 L5.6 10.8 Z" fill="#0a96dc" stroke="#164a7b" stroke-width="1.3" stroke-linejoin="round"/><path d="M2.5 24.6 H25.5" stroke="#1b9ae0" stroke-width="1.4"/></g><g transform="translate(12.5,257)"><g transform="translate(-4.6 -7)"><path d="M15 7.3999999999999995 L20 10.0 V15.8 L15 18.2 L10 15.8 V10.0 Z" fill="#fff" stroke="#164a7b" stroke-width="1.5" stroke-linejoin="round"/><path d="M11.5 10.799999999999999 L15 12.6 L18.5 10.799999999999999 M15 12.6 V17.6" fill="none" stroke="#164a7b" stroke-width="1.1"/><path d="M10.1 16.8 L15.1 19.4 V25.2 L10.1 27.6 L5.1 25.2 V19.4 Z" fill="#fff" stroke="#164a7b" stroke-width="1.5" stroke-linejoin="round"/><path d="M6.6 20.2 L10.1 22 L13.6 20.2 M10.1 22 V27" fill="none" stroke="#164a7b" stroke-width="1.1"/><path d="M19.8 16.8 L24.8 19.4 V25.2 L19.8 27.6 L14.8 25.2 V19.4 Z" fill="#fff" stroke="#164a7b" stroke-width="1.5" stroke-linejoin="round"/><path d="M16.3 20.2 L19.8 22 L23.3 20.2 M19.8 22 V27" fill="none" stroke="#164a7b" stroke-width="1.1"/></g></g><g transform="translate(52.5,258.5)"><path d="M1 10.5 L11 0.8 H15 L22.5 8.5 Q23.2 9.5 22.5 10.5 L11 21.8 H1.5 Q0.8 21.8 0.8 21 Z" fill="#dce9f6" stroke="#164a7b" stroke-width="1.5" stroke-linejoin="round" transform="rotate(0)"/><circle cx="5" cy="17.5" r="1.4" fill="none" stroke="#1b9ae0" stroke-width="1"/></g><rect x="9" y="290" width="65" height="3" fill="#8a8a8a"/><g transform="translate(10.5,303.2)"><path d="M0 23.6 L4.4 14.4 L9.4 19.4 Z" fill="#0f3d6b"/><path d="M6 15.4 L20.6 0.9 L23.3 3.6 L8.7 18.1 Z" fill="#ffffff" stroke="#ff0000" stroke-width="1.5" stroke-linejoin="miter"/><circle cx="20.5" cy="3.6" r="0.7" fill="none" stroke="#ff0000" stroke-width="0.6"/></g><g transform="translate(50,303)"><path d="M3 19 Q5.5 15.5 9 17 Q12 19 15 22 Q18 24.5 20 22.5 Q21 19.5 17 17 Q11 14 6.5 11.5 Q3 9 5.5 7 Q8.5 5 13 6.5 Q17 8 20 7.5" fill="none" stroke="#1b9ae0" stroke-width="1.4"/><circle cx="2.7" cy="21.4" r="2.9" fill="#0f3d6b" stroke="#fff" stroke-width=".8"/><circle cx="21.6" cy="3" r="3.4" fill="#ff0000" stroke="#fff" stroke-width=".8"/></g><g transform="translate(10.3,342)"><rect x="1.8" y="1.2" width="19.4" height="22.3" fill="#dce9f6" stroke="#1b9ae0" stroke-width="1.6"/><path d="M2.6 21.9 L20.8 2.9" stroke="#164a7b" stroke-width="1.2"/><circle cx="2.6" cy="21.9" r="2.9" fill="#0f3d6b" stroke="#fff" stroke-width=".8"/><circle cx="20.8" cy="3.1" r="3.4" fill="#ff0000" stroke="#fff" stroke-width=".8"/></g><g transform="translate(49,342)"><rect x="5.1" y="0.8" width="19" height="22" fill="#dce9f6" stroke="#1b9ae0" stroke-width="1.6"/><path d="M8 8.3 Q20 9 23.5 20" fill="none" stroke="#164a7b" stroke-width="1.5"/><circle cx="5.1" cy="22.7" r="2.9" fill="#0f3d6b" stroke="#fff" stroke-width=".8"/><circle cx="23.9" cy="22.7" r="2.9" fill="#0f3d6b" stroke="#fff" stroke-width=".8"/><circle cx="5.1" cy="8.4" r="3.9" fill="#ff0000" stroke="#fff" stroke-width=".8"/></g><g transform="translate(9.8,382)"><circle cx="12.9" cy="12.9" r="11.8" fill="#dce9f6" stroke="#1b9ae0" stroke-width="1.6"/><path d="M12.9 12.9 L21.9 4" stroke="#164a7b" stroke-width="1.2"/><circle cx="12.9" cy="12.9" r="2.8" fill="#0f3d6b" stroke="#fff" stroke-width=".8"/><circle cx="21.9" cy="4" r="3.4" fill="#ff0000" stroke="#fff" stroke-width=".8"/></g><g transform="translate(48.8,382)"><path d="M0.8 12.9 L6.7 1.2 H20.3 L27 12.9 L20.3 24.5 H6.7 Z" fill="#dce9f6" stroke="#1b9ae0" stroke-width="1.5" stroke-linejoin="round"/><path d="M14 12.9 L19.7 3.5" stroke="#164a7b" stroke-width="1.2"/><circle cx="14" cy="12.9" r="2.8" fill="#0f3d6b" stroke="#fff" stroke-width=".8"/><circle cx="19.7" cy="3.5" r="3.4" fill="#ff0000" stroke="#fff" stroke-width=".8"/></g><g transform="translate(10.5,422.8)"><path d="M2.5 2.9 V21.9 L21.3 3.3" fill="none" stroke="#164a7b" stroke-width="1.2"/><path d="M4.5 22.2 Q20 20.5 21.8 7" fill="none" stroke="#1b9ae0" stroke-width="1.8"/><circle cx="2.5" cy="2.9" r="2.9" fill="#0f3d6b" stroke="#fff" stroke-width=".8"/><circle cx="2.5" cy="21.9" r="2.9" fill="#0f3d6b" stroke="#fff" stroke-width=".8"/><circle cx="21.3" cy="3.3" r="3.4" fill="#ff0000" stroke="#fff" stroke-width=".8"/></g><g transform="translate(50,422.5)"><path d="M7.5 3 Q14 1 19.5 3.8" fill="none" stroke="#1b9ae0" stroke-width="1.6"/><path d="M2.8 8 Q0.5 14 3.3 19.5" fill="none" stroke="#1b9ae0" stroke-width="1.6"/><path d="M4.6 4.1 L14.1 13.6 M22.1 4.9 L5.3 21.8" fill="none" stroke="#164a7b" stroke-width="1.2"/><circle cx="22.1" cy="4.9" r="2.9" fill="#0f3d6b" stroke="#fff" stroke-width=".8"/><circle cx="5.3" cy="21.8" r="2.9" fill="#0f3d6b" stroke="#fff" stroke-width=".8"/><circle cx="4.6" cy="4.1" r="3.4" fill="#ff0000" stroke="#fff" stroke-width=".8"/></g><g transform="translate(11,461.5)"><path d="M12.5 3 Q22 5 21.5 18" fill="none" stroke="#1b9ae0" stroke-width="1.6"/><path d="M4 20.5 Q10 27 18.5 24" fill="none" stroke="#1b9ae0" stroke-width="1.6"/><path d="M9.7 3.6 L21.4 21.5 L2.5 16.9" fill="none" stroke="#164a7b" stroke-width="1.2"/><circle cx="2.5" cy="16.9" r="2.9" fill="#0f3d6b" stroke="#fff" stroke-width=".8"/><circle cx="21.4" cy="21.5" r="2.9" fill="#0f3d6b" stroke="#fff" stroke-width=".8"/><circle cx="9.7" cy="3.6" r="3.4" fill="#ff0000" stroke="#fff" stroke-width=".8"/></g><g transform="translate(50,461.5)"><path d="M3.2 4 H22.3 Q21.5 19 3.2 22.7 Z" fill="#dce9f6"/><path d="M3.2 4 H22.3" stroke="#1b9ae0" stroke-width="1.5"/><path d="M22 8 Q20 19.5 6 22.3" fill="none" stroke="#1b9ae0" stroke-width="1.6"/><path d="M3.2 4 V22.7 L22.3 4.5" fill="none" stroke="#164a7b" stroke-width="1.3"/><circle cx="3.2" cy="4" r="2.9" fill="#0f3d6b" stroke="#fff" stroke-width=".8"/><circle cx="3.2" cy="22.7" r="2.9" fill="#0f3d6b" stroke="#fff" stroke-width=".8"/><circle cx="22.3" cy="4.5" r="3.4" fill="#ff0000" stroke="#fff" stroke-width=".8"/></g><rect x="9" y="497" width="65" height="3" fill="#8a8a8a"/><g transform="translate(9.5,508)"><path d="M13.5 -0.2 L17 6 H15.3 V10.2 H11.7 V6 H10 Z" fill="#ff0000" stroke="#fff" stroke-width=".5" stroke-linejoin="round" transform="rotate(0 13.5 13.5)"/><path d="M13.5 -0.2 L17 6 H15.3 V10.2 H11.7 V6 H10 Z" fill="#ff0000" stroke="#fff" stroke-width=".5" stroke-linejoin="round" transform="rotate(90 13.5 13.5)"/><path d="M13.5 -0.2 L17 6 H15.3 V10.2 H11.7 V6 H10 Z" fill="#ff0000" stroke="#fff" stroke-width=".5" stroke-linejoin="round" transform="rotate(180 13.5 13.5)"/><path d="M13.5 -0.2 L17 6 H15.3 V10.2 H11.7 V6 H10 Z" fill="#ff0000" stroke="#fff" stroke-width=".5" stroke-linejoin="round" transform="rotate(270 13.5 13.5)"/></g><g transform="translate(48.8,509.5)"><path d="M0.8 12.3 L12 7.8 L27.6 13.3 L12.3 21.8 Z" fill="#dce9f6" stroke="#1b9ae0" stroke-width="1.5" stroke-linejoin="round"/><path d="M0.8 12.3 V15.3 L12.3 25.3 L27.6 16.6 V13.3 M12.3 21.8 V25.3" fill="none" stroke="#1b9ae0" stroke-width="1.4" stroke-linejoin="round"/><path d="M14 0.3 L19.3 7.8 H16.6 V14.8 H11.4 V7.8 H8.7 Z" fill="#ff0000" stroke="#fff" stroke-width=".9" stroke-linejoin="round"/></g><g transform="translate(12,551.5)"><path d="M1.8 13.3 A8.2 8.2 0 0 1 11.5 3.5" fill="none" stroke="#ff0000" stroke-width="1.8"/><path d="M10.3 0 L18.2 4.3 L11 8.3 Z" fill="#ff0000"/><path d="M18.2 9.5 A8.2 8.2 0 0 1 8.5 19.5" fill="none" stroke="#ff0000" stroke-width="1.8"/><path d="M9.7 23 L1.8 18.7 L9 14.7 Z" fill="#ff0000"/></g><g transform="translate(49,549)"><path d="M9.5 3.5 Q14.5 -0.5 20 4" fill="none" stroke="#164a7b" stroke-width="1.4"/><path d="M6.5 3.5 Q1 6.5 0.8 12.5 Q1 18.5 8.5 25.5 L14.8 20 Q9 14.5 9 11 Q9.3 8.2 11 6.5 Q9 2.5 6.5 3.5 Z" fill="#dce9f6" stroke="#1b9ae0" stroke-width="1.4" stroke-linejoin="round"/><ellipse cx="11.6" cy="22.8" rx="3.6" ry="1.9" transform="rotate(-42 11.6 22.8)" fill="#fff" stroke="#1b9ae0" stroke-width="1.3"/><path d="M8.3 4 Q10.5 5.5 10.8 7" fill="none" stroke="#1b9ae0" stroke-width="1"/><circle cx="23.6" cy="6.7" r="3.1" fill="#ff0000"/></g><g transform="translate(9.5,589)"><rect x="0.8" y="0.8" width="25.5" height="24.2" fill="#dce9f6" stroke="#1b9ae0" stroke-width="1.6"/><path d="M0.8 8.4 H17.8 V25 H0.8 Z" fill="none" stroke="#164a7b" stroke-width="1.6"/><path d="M14.94 15.51 L20.69 9.66 L22.61 11.55 L24.30 2.70 L15.48 4.55 L17.40 6.44 L11.66 12.29 Z" fill="#ff0000" stroke="#fff" stroke-width="0.8" stroke-linejoin="round"/></g><g transform="translate(49.5,589)"><path d="M1.4 4.7 A14 14 0 0 1 17.3 1.9" fill="none" stroke="#1b9ae0" stroke-width="1.6" stroke-linecap="round"/><path d="M25.5 11 A14 14 0 0 1 21.4 24.9" fill="none" stroke="#1b9ae0" stroke-width="1.6" stroke-linecap="round"/><path d="M2.3 17 A7.9 7.9 0 0 1 12.2 9.7" fill="none" stroke="#164a7b" stroke-width="1.6" stroke-linecap="round"/><path d="M18 15.7 A7.9 7.9 0 0 1 10.7 25.1" fill="none" stroke="#164a7b" stroke-width="1.6" stroke-linecap="round"/><path d="M17.38 13.86 L21.91 9.29 L23.68 11.04 L25.90 1.70 L16.58 4.01 L18.35 5.77 L13.82 10.34 Z" fill="#ff0000" stroke="#fff" stroke-width="0.9" stroke-linejoin="round"/></g><g transform="translate(10.5,629)"><path d="M11.70 11.00 L11.70 4.80 L13.20 4.80 L10.70 0.30 L8.20 4.80 L9.70 4.80 L9.70 11.00 Z" fill="#1b9ae0"/><path d="M10.7 19 V27" stroke="#1b9ae0" stroke-width="1.6" stroke-dasharray="1.5 1.5"/><path d="M1.5 9.5 L6 12.5" stroke="#ff0000" stroke-width="1.2" stroke-dasharray="1.3 1.3"/><path d="M1.5 21.5 L5.5 19" stroke="#2f6f3f" stroke-width="1.2" stroke-dasharray="1.3 1.3"/><path d="M15.02 14.24 L20.92 10.10 L21.84 11.42 L24.50 6.50 L18.97 7.32 L19.89 8.63 L13.98 12.76 Z" fill="#2e6b3d"/><path d="M13.99 18.74 L19.86 22.73 L18.96 24.06 L24.50 24.80 L21.77 19.92 L20.87 21.24 L15.01 17.26 Z" fill="#ff0000"/><circle cx="10.7" cy="16.2" r="3.6" fill="#0f3d6b" stroke="#fff" stroke-width=".8"/></g><g transform="translate(48.8,629.7)"><path d="M1 22 L11.3 3.5 V22 Z" fill="#fff" stroke="#164a7b" stroke-width="1.5" stroke-linejoin="miter"/><path d="M16 3.5 L26.5 22 H16 Z" fill="#dce9f6" stroke="#1b9ae0" stroke-width="1.5" stroke-linejoin="miter"/><path d="M13.5 0.5 V24" stroke="#f04848" stroke-width="1.6" stroke-dasharray="2.2 1.3"/></g><rect x="9" y="665" width="65" height="3" fill="#8a8a8a"/><g transform="translate(11.9,673.8)"><g transform="translate(-1 0)"><path d="M9.5 22.2 L1.5 26.8" stroke="#164a7b" stroke-width="1.4"/><path d="M2.8 11 Q2.5 8.6 4.8 7.6 L13.6 3.8 Q15.8 3 16.8 4.9 L21.6 13.5 Q22.5 15.3 20.8 16.3 L10.8 22 Q9 22.8 7.3 21.8 Q3.5 19.5 3 14.5 Z" fill="#dce9f6" stroke="#164a7b" stroke-width="1.5" stroke-linejoin="round"/><circle cx="11.7" cy="13.2" r="4.1" fill="#ff0000"/></g></g><g transform="translate(50.5,677.5)"><g transform="translate(-2.5 -3)"><path d="M2.1 13.2 L10.7 21.5 M11.8 3.6 L20.4 12.2 M3.6 19.3 L18.6 5" fill="none" stroke="#164a7b" stroke-width="1.5"/><text x="0" y="0" font-family="Liberation Sans" font-size="7.5" fill="#164a7b" transform="translate(5.5 11.3) rotate(-45)">3</text><circle cx="23.6" cy="15.4" r="3.4" fill="#ff0000"/><circle cx="14.3" cy="24.7" r="3.4" fill="#ff0000"/></g></g><g transform="translate(12,719)"><path d="M4.4 22.9 A13.1 13.1 0 0 1 23.1 4.4 Z" fill="#0f3d6b"/><path d="M5.26 17.9 A9.5 9.5 0 0 1 18 5.16 Z" fill="#f1f1f5"/><path d="M5.8 19.5 L19.6 5.7" stroke="#fff" stroke-width="0.7"/><circle cx="18.53" cy="3.41" r="0.65" fill="#fff"/><circle cx="14.73" cy="2.39" r="0.65" fill="#fff"/><circle cx="10.83" cy="2.74" r="0.65" fill="#fff"/><circle cx="7.27" cy="4.39" r="0.65" fill="#fff"/><circle cx="4.49" cy="7.17" r="0.65" fill="#fff"/><circle cx="2.84" cy="10.73" r="0.65" fill="#fff"/><circle cx="2.49" cy="14.63" r="0.65" fill="#fff"/><circle cx="3.51" cy="18.43" r="0.65" fill="#fff"/></g><g transform="translate(48.8,716)"><rect x="6.9" y="1.2" width="19.3" height="17.3" rx="1" fill="#fff" stroke="#164a7b" stroke-width="1.6"/><text x="16.6" y="13.5" font-family="Liberation Serif" font-size="9.5" fill="#164a7b" text-anchor="middle">A1</text><path d="M6.9 8.5 H2.9 V22" fill="none" stroke="#164a7b" stroke-width="1.4"/><path d="M0.2 21 H5.8 L3 26.8 Z" fill="#164a7b"/></g><g transform="translate(8.8,757.2)"><circle cx="13" cy="12.4" r="9.1" fill="#fff" stroke="#164a7b" stroke-width="1.5"/><path d="M0.3 12.4 H24" stroke="#164a7b" stroke-width="1.5"/><path d="M15.4 0.4 L27.4 12.4 L15.1 24.7" fill="none" stroke="#164a7b" stroke-width="1.7"/><path d="M22.3 7.3 L27.6 12.4 L22.3 17.5 Z" fill="#164a7b"/><text x="13" y="9.8" font-family="Liberation Sans" font-size="6.5" fill="#164a7b" text-anchor="middle">C</text><text x="13" y="19.5" font-family="Liberation Sans" font-size="5" fill="#164a7b" text-anchor="middle">A-B</text></g><g transform="translate(53,757)"><g transform="translate(-5 -3)"><path d="M13.4 3.4 H16.4 L22.5 26.5 L18.7 28.2 Z" fill="#1b9ae0"/><path d="M11.2 8 H13.2 L10 24 H7.5 Z M9 17.3 H14.5 V19 H9 Z" fill="#1b9ae0"/><path d="M10.3 3.4 H12.8 L8 23.5 L5.5 23.7 Z M11.8 3.4 H14.2 L19 27.5 H16.5 Z M8.3 17.5 H15 L15.3 19.5 H7.8 Z" fill="#e6f2fb" stroke="#a8b8c4" stroke-width="0.6" stroke-linejoin="round"/></g></g><rect x="9" y="792" width="65" height="3" fill="#8a8a8a"/><rect x="79" y="810" width="3" height="28" fill="#dcdde5"/><rect x="1492" y="810" width="2" height="28" fill="#dcdde5"/><path d="M1515.5 838 V811 Q1515.5 809.5 1517 809.5 H1763 Q1764.5 809.5 1764.5 811 V838" fill="none" stroke="#a5a5a8" stroke-width="1"/><circle cx="20.7" cy="824.5" r="8.3" fill="none" stroke="#9a9a9a" stroke-width="1.3"/><path d="M20.7 830 L17.6 824.5 A3.4 3.4 0 1 1 23.8 824.5 Z" fill="#8d8d8d"/><circle cx="20.7" cy="822.5" r="1.2" fill="#f1f1f5"/><circle cx="55.5" cy="824.5" r="8.3" fill="none" stroke="#9a9a9a" stroke-width="1.3"/><circle cx="55.5" cy="820.3" r="1.5" fill="#8d8d8d"/><rect x="54" y="822.5" width="3" height="7" rx="1" fill="#8d8d8d"/><rect x="1790" y="832" width="1" height="1" fill="#a0a0a4"/><rect x="1787" y="835" width="1" height="1" fill="#a0a0a4"/><rect x="1790" y="835" width="1" height="1" fill="#a0a0a4"/><rect x="1793" y="829" width="1" height="1" fill="#a0a0a4"/><rect x="1793" y="832" width="1" height="1" fill="#a0a0a4"/><rect x="1793" y="835" width="1" height="1" fill="#a0a0a4"/><line x1="940.5" y1="154" x2="940.5" y2="479" stroke="#00a800" stroke-width="1.2"/><line x1="940.5" y1="482" x2="940.5" y2="805" stroke="#00a800" stroke-width="1.2" stroke-dasharray="2 2"/><line x1="940" y1="479.5" x2="1795" y2="479.5" stroke="#b80000" stroke-width="1.2"/><line x1="88" y1="479.5" x2="939" y2="479.5" stroke="#b80000" stroke-width="1.2" stroke-dasharray="2 2"/><path d="M1642 16.5 H1654" stroke="#7a7a7a" stroke-width="1"/><rect x="1700.5" y="11.5" width="11" height="11" rx="1.5" fill="none" stroke="#7a7a7a" stroke-width="1"/><path d="M1759 11 L1771 23 M1771 11 L1759 23" stroke="#7a7a7a" stroke-width="1"/><path d="M0 0 H5.5 Q1.2 1.5 0 7 Z" fill="#5f7f9d"/><path d="M1795 0 H1789 Q1793.8 1.5 1795 7 Z" fill="#2f5b86"/><g transform="translate(4,3)" fill="none" stroke="#1768b3" stroke-width="1.55" stroke-linejoin="round"><path d="M7.3 8.6 L14.6 4.5 L22.8 8.8 V19.3 L16.2 22.8 V13 L10.2 9.8"/><path d="M10.2 8.9 Q12.3 7.9 14.3 8.4 L19.6 11.1 V16.6 L17 18.2"/><path d="M6.1 10.4 L13.7 14.4 V22.8"/><path d="M7.1 15.4 L12.3 18.1"/><path d="M6.1 17.6 L12.3 20.9"/></g><rect x="89" y="158" width="7" height="1" fill="#2b1e1e"/><rect x="92" y="158" width="1" height="9" fill="#2b1e1e"/><rect x="98" y="160" width="4" height="1" fill="#2b1e1e"/><rect x="97" y="161" width="1" height="5" fill="#2b1e1e"/><rect x="102" y="161" width="1" height="5" fill="#2b1e1e"/><rect x="98" y="166" width="4" height="1" fill="#2b1e1e"/><rect x="104" y="160" width="1" height="10" fill="#2b1e1e"/><rect x="105" y="160" width="4" height="1" fill="#2b1e1e"/><rect x="109" y="161" width="1" height="5" fill="#2b1e1e"/><rect x="105" y="166" width="4" height="1" fill="#2b1e1e"/><rect x="50" y="816" width="11" height="16" fill="#f1f1f5"/><circle cx="55.5" cy="824.5" r="8.3" fill="none" stroke="#8f8f8a" stroke-width="1.3"/><circle cx="55.5" cy="820.4" r="1.4" fill="#8f8f8a"/><path d="M53.3 825.5 Q53.3 822.5 55.5 822.5 Q57.7 822.5 57.7 825.5 L56.6 826 V829.5 H54.4 V826 Z" fill="#8f8f8a"/></svg>
<div class="t" style="left:35px;top:8px;font-size:15.7px;letter-spacing:-0.3px;line-height:20px;color:#878787">Untitled - SketchUp 2025</div>
<span class="m" style="left:12.899999999999999px">File</span><span class="m" style="left:54.6px">Edit</span><span class="m" style="left:99.0px">View</span><span class="m" style="left:150.5px">Camera</span><span class="m" style="left:223.0px">Draw</span><span class="m" style="left:277.59999999999997px">Tools</span><span class="m" style="left:332.8px">Window</span><span class="m" style="left:408.2px">Extensions</span><span class="m" style="left:501.2px">Help</span>
<div class="t" style="left:89px;top:817px;font-size:16px;line-height:20px;color:#383838;letter-spacing:0.35px">Click or drag to select objects. Shift = Add/Subtract. Ctrl = Add. Shift + Ctrl = Subtract.</div>
</body></html>
